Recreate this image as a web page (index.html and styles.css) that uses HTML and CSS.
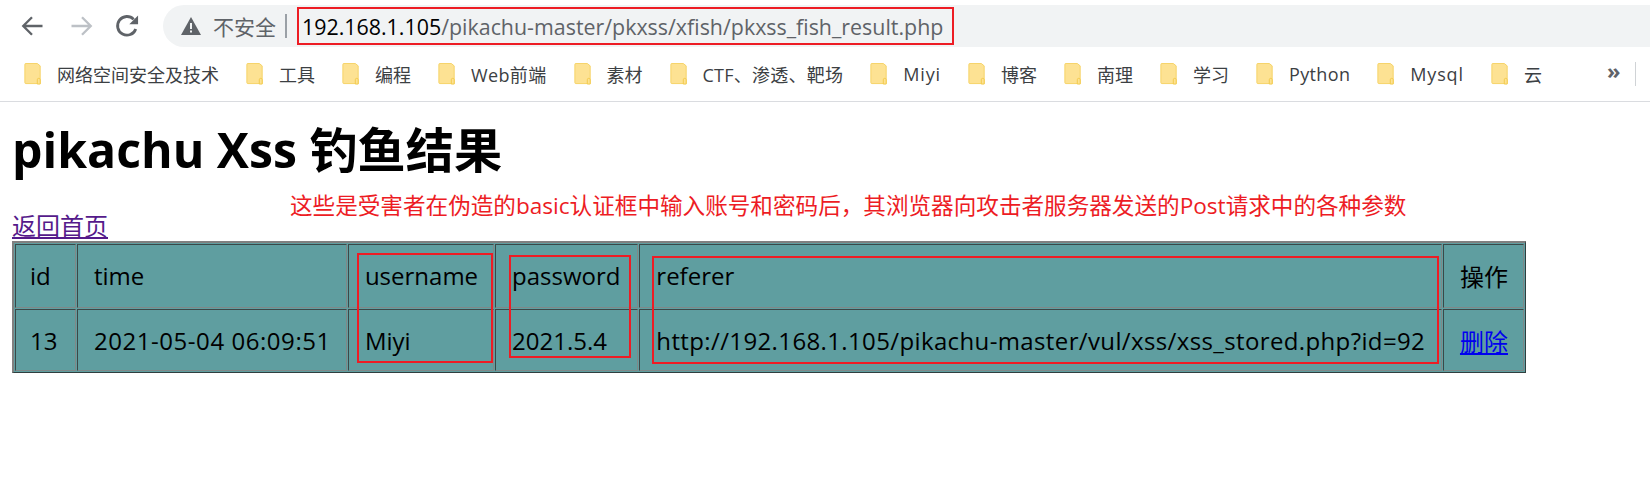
FILE: index.html
```
<!DOCTYPE html>
<html lang="zh-CN">
<head>
<meta charset="utf-8">
<title>pikachu Xss 钓鱼结果</title>
<link rel="stylesheet" href="styles.css">
</head>
<body>
<svg class="defs" width="0" height="0" aria-hidden="true">
  <symbol id="folder" viewBox="0 0 18 23">
    <path d="M1.5 .5H13.5L16.5 3V21.5H1.5A1 1 0 0 1 .5 20.5V1.5A1 1 0 0 1 1.5 .5Z" fill="#fde293" stroke="#f6d264"/>
    <path d="M13.5 22V17.5A1.5 1.5 0 0 1 16.5 17.5V22Z" fill="#fde293" stroke="#f2c94c"/>
  </symbol>
</svg>
<header class="toolbar">
  <svg class="nav-icon nav-back" viewBox="0 0 24 24"><path d="M21 12H5M12 4.500L4.500 12L12 19.500" fill="none" stroke="#5f6368" stroke-width="2"/></svg>
  <svg class="nav-icon nav-forward" viewBox="0 0 24 24"><path d="M3 12H19M12 4.500L19.500 12L12 19.500" fill="none" stroke="#bdc1c6" stroke-width="2"/></svg>
  <svg class="nav-icon nav-reload" viewBox="0 0 24 24"><path d="M19.500 14.500A8 8 0 1 1 17.700 6.300" fill="none" stroke="#5f6368" stroke-width="2.400"/><path d="M21.500 3V10.500H14Z" fill="#5f6368"/></svg>
  <div class="omnibox">
    <svg class="warn" viewBox="0 0 20 18"><path d="M10 0L20 18H0Z" fill="#5f6368"/><path d="M9 6H11V12H9ZM9 13.500H11V15.500H9Z" fill="#f1f3f4"/></svg>
    <span class="insecure">不安全</span>
    <span class="divider"></span>
    <span class="url"><span class="host">192.168.1.105</span>/pikachu-master/pkxss/xfish/pkxss_fish_result.php</span>
  </div>
</header>
<nav class="bookmarks">
  <a class="bm"><svg class="folder"><use href="#folder"/></svg>网络空间安全及技术</a>
  <a class="bm"><svg class="folder"><use href="#folder"/></svg>工具</a>
  <a class="bm"><svg class="folder"><use href="#folder"/></svg>编程</a>
  <a class="bm ls-s"><svg class="folder"><use href="#folder"/></svg>Web前端</a>
  <a class="bm"><svg class="folder"><use href="#folder"/></svg>素材</a>
  <a class="bm ls-xs"><svg class="folder"><use href="#folder"/></svg>CTF、渗透、靶场</a>
  <a class="bm ls-l"><svg class="folder"><use href="#folder"/></svg>Miyi</a>
  <a class="bm"><svg class="folder"><use href="#folder"/></svg>博客</a>
  <a class="bm"><svg class="folder"><use href="#folder"/></svg>南理</a>
  <a class="bm"><svg class="folder"><use href="#folder"/></svg>学习</a>
  <a class="bm ls-s"><svg class="folder"><use href="#folder"/></svg>Python</a>
  <a class="bm ls-l"><svg class="folder"><use href="#folder"/></svg>Mysql</a>
  <a class="bm"><svg class="folder"><use href="#folder"/></svg>云</a>
  <span class="more">»</span>
  <span class="bm-sep"></span>
</nav>
<main class="page">
  <h1 class="title">pikachu Xss 钓鱼结果</h1>
  <a class="home" href="#">返回首页</a>
  <table class="result">
    <tr class="head">
      <td class="c-id">id</td><td class="c-time">time</td><td class="c-user">username</td><td class="c-pass">password</td><td class="c-ref">referer</td><td class="c-op">操作</td>
    </tr>
    <tr class="row">
      <td class="c-id">13</td><td class="c-time stretch-time">2021-05-04 06:09:51</td><td class="c-user">Miyi</td><td class="c-pass">2021.5.4</td><td class="c-ref stretch-url">http://192.168.1.105/pikachu-master/vul/xss/xss_stored.php?id=92</td><td class="c-op"><a class="del" href="#">删除</a></td>
    </tr>
  </table>
</main>
<div class="note">这些是受害者在伪造的basic认证框中输入账号和密码后，其浏览器向攻击者服务器发送的Post请求中的各种参数</div>
<div class="mark mark-url"></div>
<div class="mark mark-user"></div>
<div class="mark mark-pass"></div>
<div class="mark mark-ref"></div>
</body>
</html>
```
FILE: styles.css
```
* { box-sizing: border-box; }
html, body { margin: 0; padding: 0; background: #fff; }
body {
  width: 1650px;
  height: 498px;
  overflow: hidden;
  position: relative;
  font-family: "Open Sans", "Noto Sans CJK SC", sans-serif;
  color: #000;
}
.defs { position: absolute; }

.toolbar {
  height: 52px;
  padding: 5px 0 5px 18px;
  display: flex;
  align-items: center;
}
.nav-icon { width: 28px; height: 28px; flex: none; }
.nav-back { margin-right: 22px; }
.nav-forward { margin-right: 17px; }
.nav-reload { margin-right: 22px; }
.omnibox {
  flex: 1;
  height: 42px;
  background: #f1f3f4;
  border-radius: 21px 0 0 21px;
  display: flex;
  align-items: center;
  padding-left: 18px;
}
.warn { width: 20px; height: 18px; flex: none; margin-right: 12px; }
.insecure { font-size: 21px; color: #5f6368; }
.divider { width: 2px; height: 24px; background: #9aa0a6; margin: 0 15px 0 9px; }
.url { font-size: 21.4px; color: #5f6368; white-space: nowrap; }
.host { color: #000; }

.bookmarks {
  height: 50px;
  border-bottom: 1px solid #dadce0;
  padding: 0 0 5px 24px;
  display: flex;
  align-items: center;
  gap: 27px;
  font-size: 18px;
  color: #3c4043;
}
.bm { display: flex; align-items: center; gap: 15px; white-space: nowrap; }
.ls-xs { letter-spacing: 0.25px; }
.ls-s { letter-spacing: 0.35px; }
.ls-l { letter-spacing: 0.85px; }
.folder { width: 18px; height: 22px; flex: none; }
.more { position: absolute; left: 1607px; top: 55px; font-size: 22px; font-weight: 700; color: #5f6368; }
.bm-sep { position: absolute; left: 1635px; top: 62px; width: 1px; height: 24px; background: #d0d3d6; }

.page { padding: 0 12px; }
.title { margin: 14px 0 0; font-size: 48.2px; line-height: 66px; font-weight: 700; }
.home { display: block; margin-top: 28px; width: max-content; font-size: 24px; line-height: 31px; color: #551a8b; }
.result {
  width: 1514px;
  border-collapse: separate;
  border-spacing: 1px;
  background: #5f9ea0;
  border-style: solid;
  border-width: 2px 1px 1px 2px;
  border-color: #808080 #2f3f3f #2f3f3f #808080;
  font-size: 24px;
}
.result td {
  border: 1px solid;
  border-color: #3a4848 #808888 #808888 #3a4848;
  padding: 0 15px 0 16px;
  white-space: nowrap;
}
.head td { height: 64px; padding-bottom: 2px; }
.row td { height: 62px; }
.result .c-id { width: 62px; padding-left: 14px; }
.c-time { width: 270px; }
.c-user { width: 146px; }
.c-pass { width: 144px; }
.c-ref { width: 803px; }
.c-op { width: 81px; }
.stretch-time { letter-spacing: 0.55px; }
.stretch-url { letter-spacing: 0.37px; }
.del { color: #0000ee; }

.note {
  position: absolute;
  left: 290px;
  top: 190px;
  font-size: 22.6px;
  line-height: 32px;
  color: #ed1c24;
  white-space: nowrap;
}
.mark { position: absolute; border: 2px solid #ed1c24; }
.mark-url { left: 297px; top: 7px; width: 657px; height: 38px; }
.mark-user { left: 357px; top: 253px; width: 136px; height: 110px; }
.mark-pass { left: 509px; top: 255px; width: 122px; height: 103px; }
.mark-ref { left: 652px; top: 256px; width: 787px; height: 108px; }
```
